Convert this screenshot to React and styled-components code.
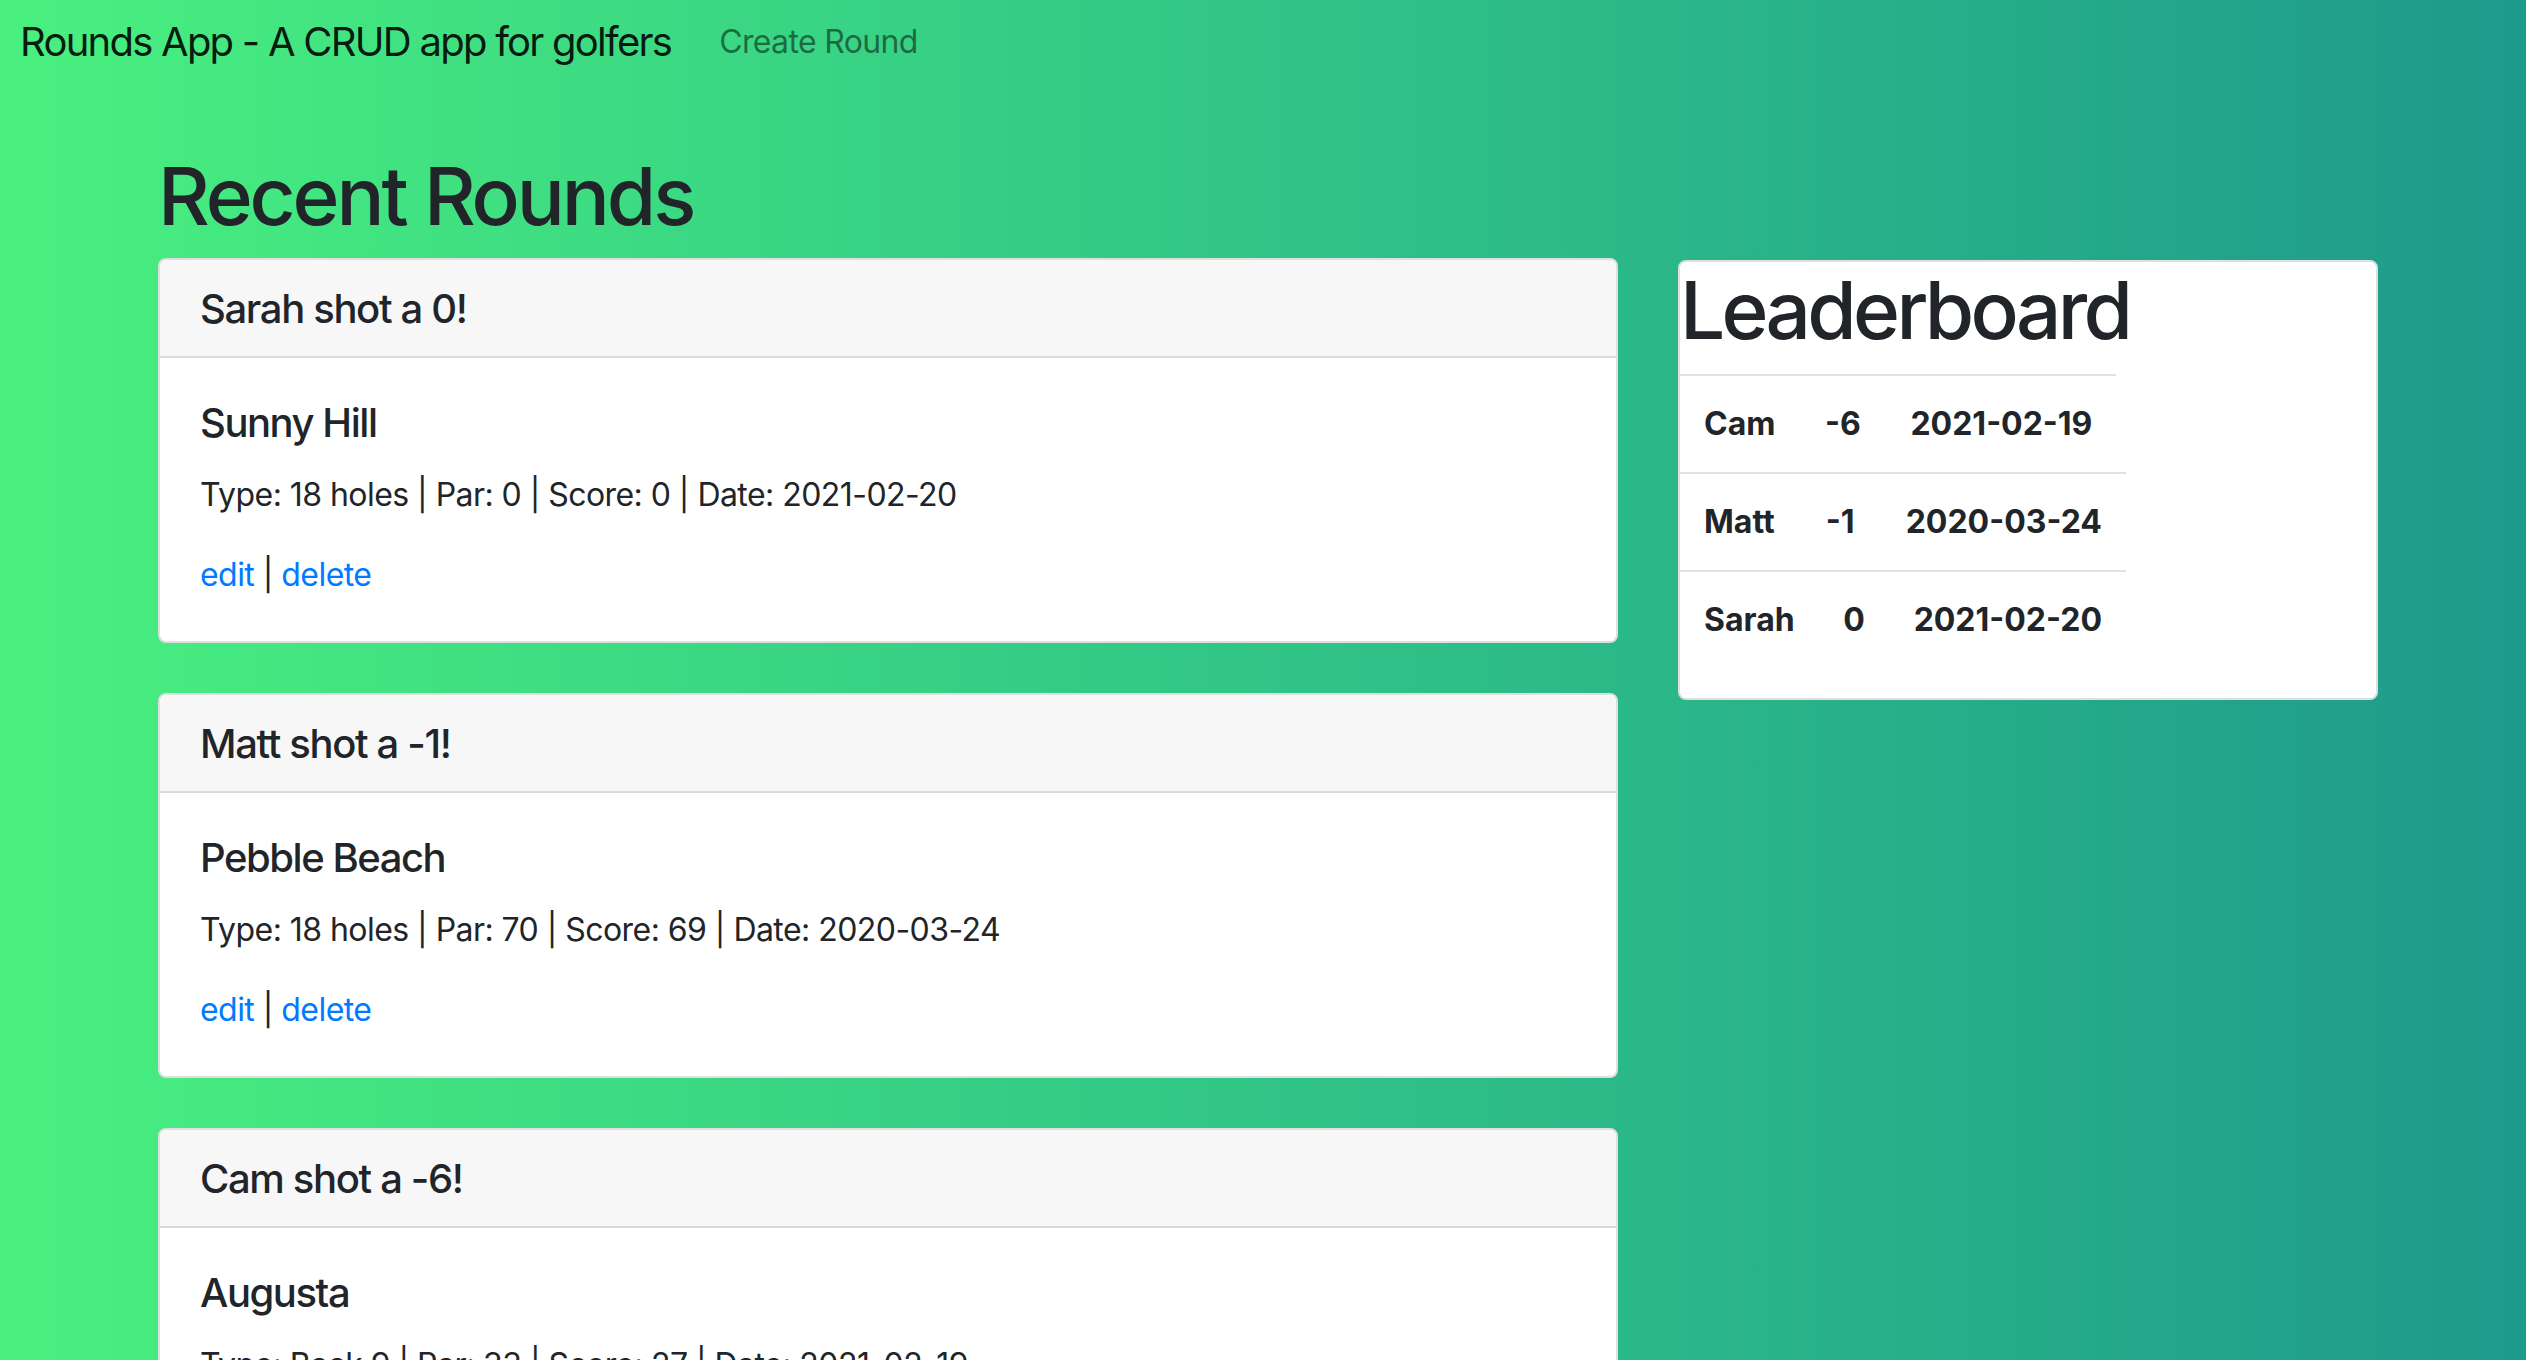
import React from "react"
import styled, { createGlobalStyle } from "styled-components"

const GlobalStyle = createGlobalStyle`
  html, body {
    margin: 0;
    padding: 0;
  }
  body {
    min-height: 100vh;
    font-family: Inter, "Liberation Sans", sans-serif;
    font-size: 32px;
    line-height: 1.5;
    letter-spacing: -0.55px;
    color: #212529;
    background: linear-gradient(to right, #49f07f 0%, #33c986 45%, #1e9a8c 100%);
  }
  *, *::before, *::after { box-sizing: border-box; }
`

const Navbar = styled.nav`
  display: flex;
  align-items: center;
  padding: 2px 20px;
`

const Brand = styled.a`
  font-size: 40px;
  line-height: 60px;
  letter-spacing: -1.75px;
  padding: 10px 0;
  margin-right: 32px;
  color: rgba(0, 0, 0, 0.9);
  text-decoration: none;
`

const NavLink = styled.a`
  font-size: 32px;
  line-height: 48px;
  letter-spacing: -0.65px;
  padding: 16px;
  color: rgba(0, 0, 0, 0.5);
  text-decoration: none;
`

const Main = styled.main`
  margin: 64px 0 0 158px;
`

const PageTitle = styled.h1`
  font-size: 80px;
  font-weight: 500;
  line-height: 1.2;
  letter-spacing: -3.1px;
  margin: 0 0 14px;
`

const Columns = styled.div`
  display: grid;
  grid-template-columns: 1460px 700px;
  column-gap: 60px;
  align-items: start;
`

const RoundList = styled.div`
  display: flex;
  flex-direction: column;
  gap: 50px;
  padding-bottom: 60px;
`

const Card = styled.div`
  background: #fff;
  border: 2px solid #dfdfdf;
  border-radius: 8px;
  overflow: hidden;
`

const CardHeader = styled.div`
  padding: 25px 40px 23px;
  background: #f7f7f7;
  border-bottom: 2px solid #dadada;
  font-size: 40px;
  font-weight: 500;
  line-height: 1.2;
  letter-spacing: -1.35px;
`

const CardBody = styled.div`
  padding: 41px 40px 42px;
`

const CardTitle = styled.h5`
  font-size: 40px;
  font-weight: 500;
  line-height: 1.2;
  letter-spacing: -1.45px;
  margin: 0 0 24px;
`

const Details = styled.p`
  margin: 0 0 32px;
`

const Actions = styled.div`
  a {
    color: #007bff;
    text-decoration: none;
  }
`

const LeaderCard = styled(Card)`
  margin-top: 2px;
  padding-bottom: 30px;
`

const LeaderTitle = styled.h1`
  font-size: 80px;
  font-weight: 500;
  line-height: 1.2;
  letter-spacing: -3.7px;
  margin: 0 0 16px;
`

const ScoreRow = styled.div`
  display: flex;
  width: max-content;
  border-top: 2px solid #dee2e6;
  font-weight: 700;
  letter-spacing: 0;
`

const ScoreCell = styled.div`
  padding: 24px;
  text-align: center;
  width: ${(p) => (p.$w ? `${p.$w}px` : "auto")};
`

const rounds = [
  { player: "Sarah", score: "0", course: "Sunny Hill", type: "18 holes", par: 0, strokes: 0, date: "2021-02-20" },
  { player: "Matt", score: "-1", course: "Pebble Beach", type: "18 holes", par: 70, strokes: 69, date: "2020-03-24" },
  { player: "Cam", score: "-6", course: "Augusta", type: "Back 9", par: 33, strokes: 27, date: "2021-02-19" },
]

const leaders = [
  { player: "Cam", score: "-6", date: "2021-02-19", w: 87 },
  { player: "Matt", score: "-1", date: "2020-03-24", w: 83 },
  { player: "Sarah", score: "0", date: "2021-02-20", w: 71 },
]

function RoundCard({ round }) {
  return (
    <Card>
      <CardHeader>{round.player} shot a {round.score}!</CardHeader>
      <CardBody>
        <CardTitle>{round.course}</CardTitle>
        <Details>
          Type: {round.type} | Par: {round.par} | Score: {round.strokes} | Date: {round.date}
        </Details>
        <Actions>
          <a href="#">edit</a> | <a href="#">delete</a>
        </Actions>
      </CardBody>
    </Card>
  )
}

export default function App() {
  return (
    <>
      <GlobalStyle />
      <Navbar>
        <Brand href="#">Rounds App - A CRUD app for golfers</Brand>
        <NavLink href="#">Create Round</NavLink>
      </Navbar>
      <Main>
        <PageTitle>Recent Rounds</PageTitle>
        <Columns>
          <RoundList>
            {rounds.map((r) => (
              <RoundCard key={r.player} round={r} />
            ))}
          </RoundList>
          <LeaderCard>
            <LeaderTitle>Leaderboard</LeaderTitle>
            {leaders.map((l) => (
              <ScoreRow key={l.player}>
                <ScoreCell>{l.player}</ScoreCell>
                <ScoreCell $w={l.w}>{l.score}</ScoreCell>
                <ScoreCell>{l.date}</ScoreCell>
              </ScoreRow>
            ))}
          </LeaderCard>
        </Columns>
      </Main>
    </>
  )
}
